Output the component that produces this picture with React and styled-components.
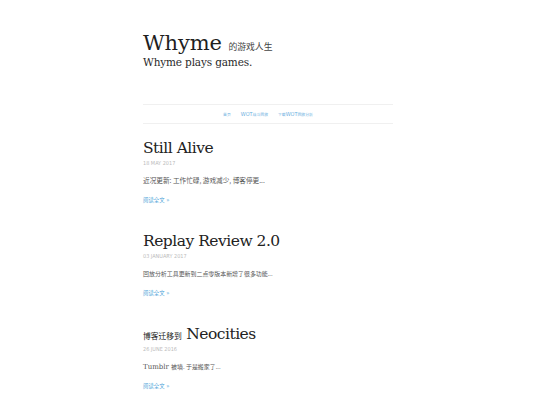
import styled, { createGlobalStyle } from "styled-components";

const GlobalStyle = createGlobalStyle`
  body {
    margin: 0;
    background: #fff;
    font-family: "DejaVu Serif", "Noto Sans CJK SC", serif;
  }
`;

const Page = styled.div`
  width: 250px;
  margin: 0 auto;
  padding: 33px 4px 0 0;
`;

const Header = styled.header`
  display: flex;
  flex-direction: column;
`;

const SiteTitle = styled.h1`
  margin: 0;
  font-size: 21px;
  font-weight: 400;
  line-height: 21px;
  color: #1f1f1f;
  letter-spacing: -0.1px;
`;

const Tagline = styled.div`
  margin-top: 3px;
  font-size: 10.5px;
  line-height: 11px;
  color: #2a2a2a;
  letter-spacing: -0.15px;
`;

// CJK runs are set smaller so they take the width they have on the page
const Cn = styled.span`
  font-family: "Noto Sans CJK SC", sans-serif;
  font-size: ${(p) => p.$scale || 1}em;
  line-height: 1;
  color: ${(p) => p.$color || "inherit"};
  letter-spacing: 0;
`;

const Nav = styled.nav`
  display: flex;
  justify-content: center;
  gap: 10px;
  margin-top: 36px;
  height: 18px;
  align-items: center;
  border-top: 1px solid #f0f0f0;
  border-bottom: 1px solid #f0f0f0;
`;

const NavItem = styled.a`
  font-family: "DejaVu Sans Condensed", "Noto Sans CJK SC", sans-serif;
  font-size: 5.5px;
  line-height: 8px;
  color: #6aaee0;
  text-decoration: none;
`;

const Post = styled.article`
  display: flex;
  flex-direction: column;
  align-items: flex-start;
  margin-top: ${(p) => (p.$first ? "13px" : "25px")};
`;

const PostTitle = styled.h2`
  margin: 0;
  font-size: 15.5px;
  font-weight: 400;
  line-height: 22px;
  color: #222;
  letter-spacing: -0.5px;
`;

const PostDate = styled.div`
  font-family: "DejaVu Sans Condensed", sans-serif;
  font-size: 5.5px;
  line-height: 8px;
  color: #bbb;
  text-transform: uppercase;
`;

const Excerpt = styled.p`
  margin: 9px 0 0;
  font-size: 7px;
  line-height: 10px;
  color: #555;
`;

const ReadMore = styled.a`
  margin-top: 9px;
  font-family: "DejaVu Sans Condensed", "Noto Sans CJK SC", sans-serif;
  font-size: 6px;
  line-height: 10px;
  color: #4a9fd8;
  text-decoration: none;
`;

const posts = [
  {
    id: "still-alive",
    title: "Still Alive",
    date: "18 May 2017",
    excerpt: <Cn $scale={0.95}>近况更新: 工作忙碌, 游戏减少, 博客停更...</Cn>,
  },
  {
    id: "replay-review",
    title: "Replay Review 2.0",
    date: "03 January 2017",
    excerpt: <Cn $scale={0.85}>回放分析工具更新到二点零版本新增了很多功能...</Cn>,
  },
  {
    id: "neocities",
    title: (
      <>
        <Cn $scale={0.5}>博客迁移到</Cn> Neocities
      </>
    ),
    date: "26 June 2016",
    excerpt: (
      <>
        Tumblr <Cn $scale={0.85}>被墙. 于是搬家了...</Cn>
      </>
    ),
  },
];

export default function App() {
  return (
    <>
      <GlobalStyle />
      <Page>
        <Header>
          <SiteTitle>
            Whyme <Cn $scale={0.42} $color="#444">的游戏人生</Cn>
          </SiteTitle>
          <Tagline>Whyme plays games.</Tagline>
        </Header>
        <Nav>
          <NavItem href="#">
            <Cn $scale={0.7}>首页</Cn>
          </NavItem>
          <NavItem href="#">
            WOT<Cn $scale={0.7}>战斗回放</Cn>
          </NavItem>
          <NavItem href="#">
            <Cn $scale={0.7}>下载</Cn>WOT<Cn $scale={0.7}>回放分析</Cn>
          </NavItem>
        </Nav>
        {posts.map((post, i) => (
          <Post key={post.id} $first={i === 0}>
            <PostTitle>{post.title}</PostTitle>
            <PostDate>{post.date}</PostDate>
            <Excerpt>{post.excerpt}</Excerpt>
            <ReadMore href="#">
              <Cn $scale={0.9}>阅读全文</Cn> »
            </ReadMore>
          </Post>
        ))}
      </Page>
    </>
  );
}
